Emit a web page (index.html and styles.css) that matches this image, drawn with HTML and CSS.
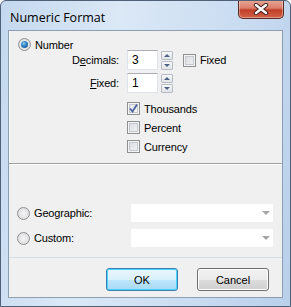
FILE: index.html
```html
<!DOCTYPE html>
<html lang="en">
<head>
  <meta charset="UTF-8">
  <meta name="viewport" content="width=device-width, initial-scale=1.0">
  <title>Numeric Format</title>
  <link rel="stylesheet" href="styles.css">
</head>
<body>
  <div class="window">
    <div class="titlebar">
      <span class="title">Numeric Format</span>
      <div class="close-btn">
        <svg width="16" height="12" viewBox="0 0 16 12">
          <path d="M3 2 L13 10 M13 2 L3 10" stroke="#3b1e1a" stroke-width="4.2" stroke-linecap="round"/>
          <path d="M3 2 L13 10 M13 2 L3 10" stroke="#fff" stroke-width="2.4" stroke-linecap="round"/>
        </svg>
      </div>
    </div>

    <div class="client">
      <div class="panel panel-number">
        <div class="radio-row">
          <span class="radio on"></span>
          <span>Number</span>
        </div>

        <div class="field-row">
          <label class="field-label">D<u>e</u>cimals:</label>
          <div class="textbox">3</div>
          <div class="spinner">
            <span class="spin up"></span>
            <span class="spin down"></span>
          </div>
          <span class="checkbox fixed-check"></span>
          <span>Fixed</span>
        </div>

        <div class="field-row second">
          <label class="field-label"><u>F</u>ixed:</label>
          <div class="textbox">1</div>
          <div class="spinner">
            <span class="spin up"></span>
            <span class="spin down"></span>
          </div>
        </div>

        <div class="check-list">
          <div class="check-row">
            <span class="checkbox checked">
              <svg width="9" height="9" viewBox="0 0 9 9">
                <path d="M1 4.5 L3.5 7.5 L8 0.5" fill="none" stroke="#4c63a0" stroke-width="1.8"/>
              </svg>
            </span>
            <span>Thousands</span>
          </div>
          <div class="check-row">
            <span class="checkbox"></span>
            <span>Percent</span>
          </div>
          <div class="check-row">
            <span class="checkbox"></span>
            <span>Currency</span>
          </div>
        </div>
      </div>

      <div class="panel panel-other">
        <div class="option-row">
          <div class="option-label">
            <span class="radio"></span>
            <span>Geographic:</span>
          </div>
          <div class="combo"><span class="arrow"></span></div>
        </div>
        <div class="option-row">
          <div class="option-label">
            <span class="radio"></span>
            <span>Custom:</span>
          </div>
          <div class="combo"><span class="arrow"></span></div>
        </div>
      </div>

      <div class="panel buttons">
        <button class="btn default">OK</button>
        <button class="btn">Cancel</button>
      </div>
    </div>
  </div>
</body>
</html>
```

FILE: styles.css
```css
body {
  margin: 0;
  padding: 0;
  background-color: #fff;
  font-family: 'Liberation Sans', Arial, sans-serif;
  font-size: 11px;
  letter-spacing: -0.15px;
  color: #000;
}

.window {
  width: 291px;
  height: 307px;
  box-sizing: border-box;
  border: 1px solid #4f6177;
  border-radius: 6px 6px 0 0;
  background: linear-gradient(100deg, #c3d8ef 0%, #dbe8f6 35%, #cfe0f3 60%, #b9d0eb 100%);
  display: flex;
  flex-direction: column;
  overflow: hidden;
}

.titlebar {
  height: 29px;
  display: flex;
  justify-content: space-between;
  align-items: flex-start;
  padding-left: 9px;
}

.title {
  font-family: 'Open Sans', 'Noto Sans', sans-serif;
  font-size: 12.5px;
  letter-spacing: 0;
  margin-top: 8px;
  color: #000;
}

.close-btn {
  width: 46px;
  height: 19px;
  margin-right: 6px;
  margin-top: -1px;
  box-sizing: border-box;
  border: 1px solid #5a2c24;
  border-top: none;
  border-radius: 0 0 5px 5px;
  background: linear-gradient(to bottom, #e8a897 0%, #d97f6b 45%, #c23f28 55%, #d1634a 100%);
  box-shadow: inset 0 0 0 1px rgba(255, 255, 255, 0.35);
  display: flex;
  align-items: center;
  justify-content: center;
}

.client {
  margin: 0 7px 8px 7px;
  flex: 1;
  border: 1px solid #8d9db2;
  background-color: #f0f0f0;
  display: flex;
  flex-direction: column;
}

.panel {
  box-sizing: border-box;
}

.panel-number {
  height: 132px;
  padding-top: 7px;
  border-left: 1px solid #fff;
}

.radio-row {
  display: flex;
  align-items: center;
  gap: 4px;
  padding-left: 8px;
  height: 13px;
}

.radio {
  width: 13px;
  height: 13px;
  box-sizing: border-box;
  border-radius: 50%;
  border: 1px solid #8c8f94;
  background: radial-gradient(circle at 50% 50%, #f5f5f5 0%, #e3e3e3 60%, #cfd1d4 100%);
  display: inline-flex;
  align-items: center;
  justify-content: center;
  flex-shrink: 0;
}

.radio.on::after {
  content: '';
  width: 7px;
  height: 7px;
  border-radius: 50%;
  background: radial-gradient(circle at 40% 35%, #8fd0f4 0%, #2b7dc0 45%, #174c7e 100%);
}

.field-row {
  display: flex;
  align-items: center;
  height: 20px;
  margin-top: -1px;
}

.field-row.second {
  margin-top: 3px;
}

.field-label {
  width: 109px;
  text-align: right;
  margin-right: 8px;
}

.textbox {
  width: 31px;
  height: 20px;
  box-sizing: border-box;
  background-color: #fff;
  border: 1px solid #dfe4ea;
  border-top-color: #abadb3;
  padding: 2px 0 0 4px;
  font-size: 12px;
}

.spinner {
  display: flex;
  flex-direction: column;
  gap: 1px;
  margin-left: 3px;
  height: 20px;
  justify-content: center;
}

.spin {
  width: 12px;
  height: 9px;
  box-sizing: border-box;
  border: 1px solid #b6bcc6;
  border-radius: 1px;
  background: linear-gradient(to bottom, #f7f7f7, #e2e4e8);
  position: relative;
}

.spin::after {
  content: '';
  position: absolute;
  left: 2px;
  width: 0;
  height: 0;
  border-left: 3px solid transparent;
  border-right: 3px solid transparent;
}

.spin.up::after {
  top: 2px;
  border-bottom: 3px solid #4d6185;
}

.spin.down::after {
  top: 2px;
  border-top: 3px solid #4d6185;
}

.checkbox {
  width: 13px;
  height: 13px;
  box-sizing: border-box;
  border: 1px solid #8e8f8f;
  background: #fff;
  box-shadow: inset 0 0 0 1px #f4f4f4, inset 0 0 0 2px #c5c9cf;
  background-image: linear-gradient(135deg, #d5d8dd, #f6f6f6);
  display: inline-flex;
  align-items: center;
  justify-content: center;
  flex-shrink: 0;
}

.checkbox.checked {
  background-image: linear-gradient(135deg, #e0e3e8, #fbfbfb);
}

.fixed-check {
  margin-left: 10px;
  margin-right: 4px;
}

.check-list {
  padding-left: 117px;
  margin-top: 9px;
  display: flex;
  flex-direction: column;
  gap: 6px;
}

.check-row {
  display: flex;
  align-items: center;
  gap: 4px;
  height: 13px;
}

.panel-other {
  height: 94px;
  border-top: 1px solid #a0a0a0;
  box-shadow: inset 0 1px 0 #fff;
  padding-top: 40px;
  display: flex;
  flex-direction: column;
  gap: 7px;
}

.option-row {
  display: flex;
  align-items: center;
  height: 18px;
}

.option-label {
  width: 114px;
  padding-left: 8px;
  display: flex;
  align-items: center;
  gap: 4px;
}

.combo {
  width: 142px;
  height: 18px;
  background-color: #fff;
  position: relative;
}

.combo .arrow {
  position: absolute;
  right: 3px;
  top: 7px;
  width: 0;
  height: 0;
  border-left: 4px solid transparent;
  border-right: 4px solid transparent;
  border-top: 4px solid #a6a6a6;
}

.buttons {
  flex: 1;
  border-top: 1px solid #d5dde4;
  display: flex;
  justify-content: flex-end;
  align-items: flex-start;
  gap: 19px;
  padding: 10px 13px 0 0;
}

.btn {
  width: 72px;
  height: 23px;
  font-family: 'Liberation Sans', Arial, sans-serif;
  font-size: 11px;
  color: #000;
  border: 1px solid #707070;
  border-radius: 3px;
  background: linear-gradient(to bottom, #f2f2f2 0%, #ebebeb 50%, #dddddd 51%, #cfcfcf 100%);
  box-shadow: inset 0 0 0 1px #fcfcfc;
  padding: 0;
}

.btn.default {
  border-color: #3c7fb1;
  background: linear-gradient(to bottom, #eaf6fd 0%, #d9f0fc 50%, #bee6fd 51%, #a7d9f5 100%);
  box-shadow: inset 0 0 0 1px #48d4fc;
}
```
